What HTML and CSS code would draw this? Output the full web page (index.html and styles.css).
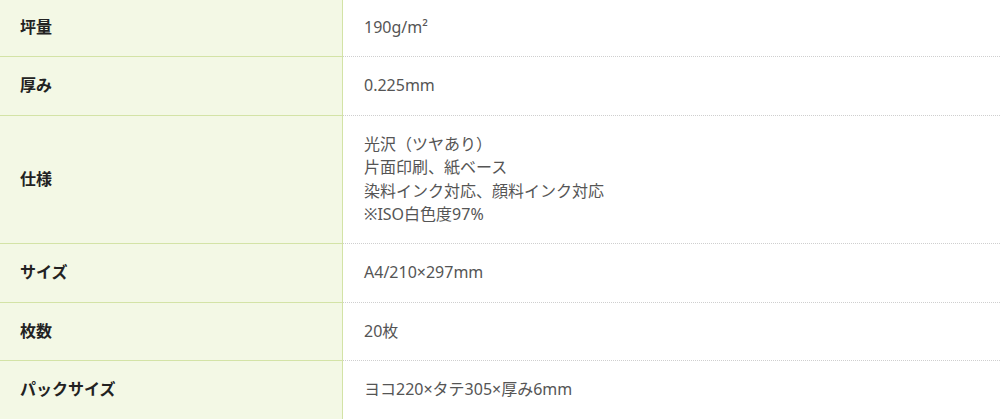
FILE: index.html
```html
<!DOCTYPE html>
<html lang="ja">
<head>
<meta charset="utf-8">
<link rel="stylesheet" href="styles.css">
</head>
<body>
<table class="spec">
  <tbody>
    <tr><th>坪量</th><td>190g/m²</td></tr>
    <tr><th>厚み</th><td>0.225mm</td></tr>
    <tr><th>仕様</th><td>光沢（ツヤあり）<br>片面印刷、紙ベース<br>染料インク対応、顔料インク対応<br>※ISO白色度97%</td></tr>
    <tr><th>サイズ</th><td>A4/210×297mm</td></tr>
    <tr><th>枚数</th><td>20枚</td></tr>
    <tr><th>パックサイズ</th><td>ヨコ220×タテ305×厚み6mm</td></tr>
  </tbody>
</table>
</body>
</html>
```

FILE: styles.css
```css
html, body {
  margin: 0;
  padding: 0;
  background: #ffffff;
}
body {
  font-family: "Noto Sans", "Noto Sans CJK JP", sans-serif;
  font-size: 16px;
  color: #555555;
}
.spec {
  width: 1000px;
  border-collapse: collapse;
  margin-top: -2px;
}
.spec th,
.spec td {
  line-height: 23.4px;
  padding: 17px 0 17px 0;
  vertical-align: middle;
  text-align: left;
}
.spec th {
  width: 322px;
  padding-left: 20px;
  background: #f3f8e5;
  color: #222222;
  font-weight: 700;
  border-top: 1px solid #d3e3a6;
  border-bottom: 1px solid #d3e3a6;
  border-right: 1px solid #d3e3a6;
}
.spec td {
  padding-left: 21px;
  border-top: 1px dotted #cfcfcf;
  border-bottom: 1px dotted #cfcfcf;
  color: #555555;
}
```
